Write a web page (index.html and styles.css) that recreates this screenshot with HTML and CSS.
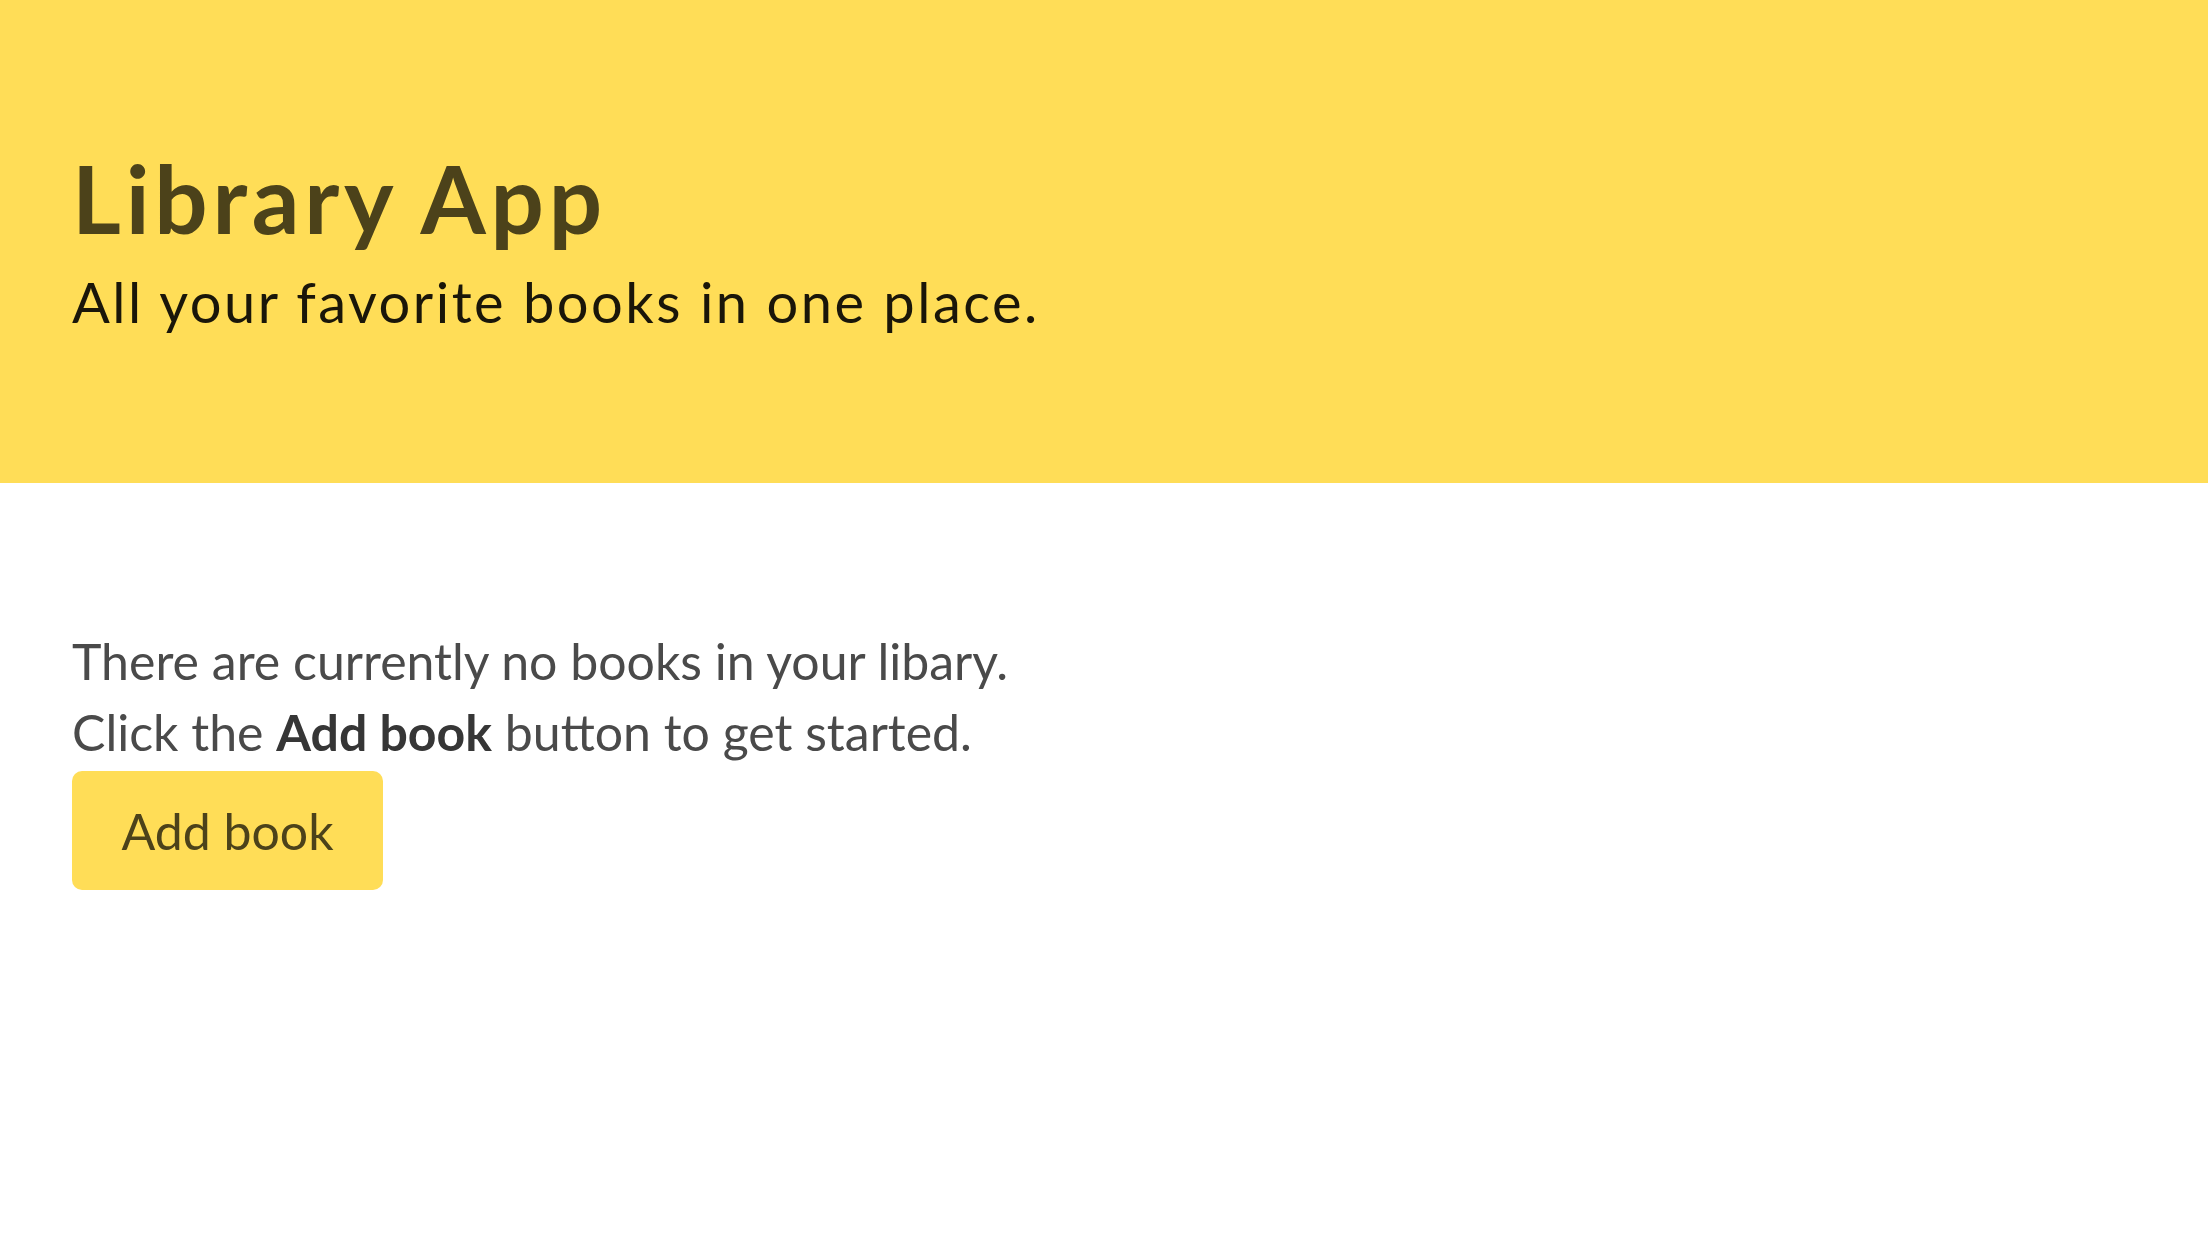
FILE: index.html
```html
<!DOCTYPE html>
<html lang="en">
<head>
<meta charset="utf-8">
<title>Library App</title>
<link rel="stylesheet" href="styles.css">
</head>
<body>
<section class="hero">
  <h1 class="title">Library App</h1>
  <h2 class="subtitle">All your favorite books in one place.</h2>
</section>
<main class="content">
  <p class="empty">There are currently no books in your libary.<br>Click the <strong>Add book</strong> button to get started.</p>
  <button class="btn">Add book</button>
</main>
</body>
</html>
```

FILE: styles.css
```css
html, body {
  margin: 0;
  padding: 0;
  background: #ffffff;
}
body {
  font-family: Lato, "Open Sans", sans-serif;
}
.hero {
  background: #ffdd57;
  height: 483px;
  box-sizing: border-box;
  padding: 147px 72px 0;
  display: flex;
  flex-direction: column;
}
.title {
  margin: 0;
  font-size: 94px;
  line-height: 1.08;
  letter-spacing: 4.8px;
  font-weight: 700;
  color: #4c421a;
}
.subtitle {
  margin: 19px 0 0;
  font-size: 56px;
  line-height: 1.2;
  letter-spacing: 2.5px;
  font-weight: 400;
  color: #1a1609;
}
.content {
  padding: 143px 72px 0;
}
.empty {
  margin: 0;
  font-size: 50px;
  line-height: 71px;
  color: #4a4a4a;
}
.empty strong {
  color: #363636;
  font-weight: 700;
}
.btn {
  margin-top: 3px;
  display: block;
  box-sizing: border-box;
  height: 119px;
  width: 311px;
  padding: 0;
  border: none;
  border-radius: 10px;
  background: #ffdd57;
  color: #4c421a;
  font-family: Lato, "Open Sans", sans-serif;
  font-size: 50px;
  line-height: 60px;
}
```
